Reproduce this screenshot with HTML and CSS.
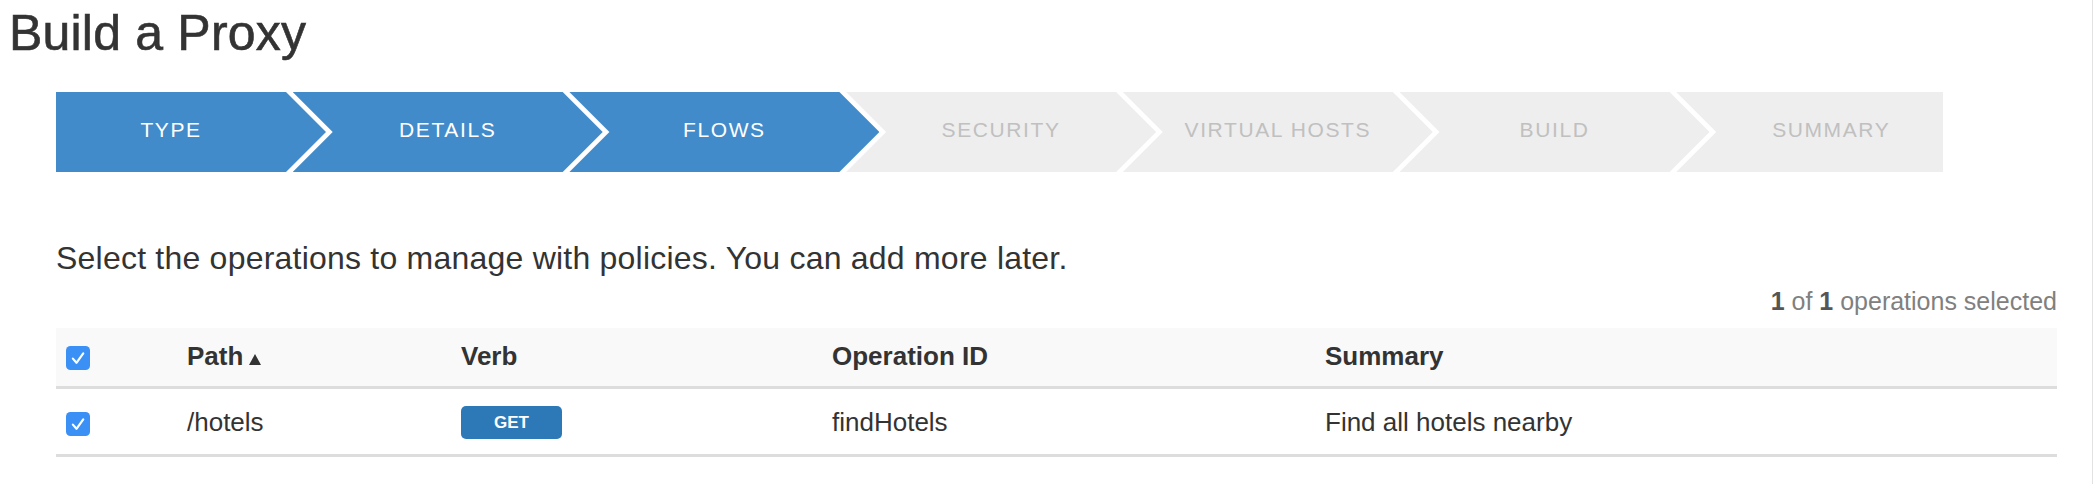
FILE: index.html
```html
<!DOCTYPE html>
<html lang="en">
<head>
<meta charset="utf-8">
<title>Build a Proxy</title>
<link rel="stylesheet" href="styles.css">
</head>
<body>
<div class="page">
  <h1 class="title">Build a Proxy</h1>
  <div class="content">
    <ol class="steps">
      <li class="step done">TYPE</li>
      <li class="step done">DETAILS</li>
      <li class="step done">FLOWS</li>
      <li class="step">SECURITY</li>
      <li class="step">VIRTUAL HOSTS</li>
      <li class="step">BUILD</li>
      <li class="step">SUMMARY</li>
    </ol>
    <p class="intro">Select the operations to manage with policies. You can add more later.</p>
    <div class="counter"><b>1</b> of <b>1</b> operations selected</div>
    <table class="ops">
      <colgroup>
        <col class="c-check">
        <col class="c-path">
        <col class="c-verb">
        <col class="c-id">
        <col>
      </colgroup>
      <thead>
        <tr>
          <th class="check-cell">
            <span class="checkbox"><svg viewBox="0 0 22 22" width="24" height="24"><rect x="0" y="0" width="22" height="22" rx="4" fill="#3b90f5"/><path d="M6.3 11.6 L9.6 15.4 L15.8 6.8" fill="none" stroke="#fff" stroke-width="2" stroke-linecap="round" stroke-linejoin="round"/></svg></span>
          </th>
          <th>Path<span class="sort"></span></th>
          <th>Verb</th>
          <th>Operation ID</th>
          <th>Summary</th>
        </tr>
      </thead>
      <tbody>
        <tr>
          <td class="check-cell">
            <span class="checkbox"><svg viewBox="0 0 22 22" width="24" height="24"><rect x="0" y="0" width="22" height="22" rx="4" fill="#3b90f5"/><path d="M6.3 11.6 L9.6 15.4 L15.8 6.8" fill="none" stroke="#fff" stroke-width="2" stroke-linecap="round" stroke-linejoin="round"/></svg></span>
          </td>
          <td>/hotels</td>
          <td><span class="verb">GET</span></td>
          <td>findHotels</td>
          <td>Find all hotels nearby</td>
        </tr>
      </tbody>
    </table>
  </div>
</div>
</body>
</html>
```
FILE: styles.css
```css
html, body {
  margin: 0;
  padding: 0;
  background: #fff;
}

body {
  font-family: "Liberation Sans", Arial, Helvetica, sans-serif;
  color: #333;
}

.page {
  box-sizing: border-box;
  width: 2093px;
  min-height: 484px;
  border-right: 1px solid #e2e2e2;
}

.title {
  margin: 0;
  padding: 3px 0 0 9px;
  font-size: 50px;
  line-height: 60px;
  font-weight: normal;
  letter-spacing: 0.2px;
  color: #333;
  -webkit-text-stroke: 0.6px #333;
}

.content {
  margin: 29px 0 0 56px;
  width: 2001px;
}

/* wizard steps */
.steps {
  display: flex;
  width: 1887px;
  height: 80px;
  margin: 0;
  padding: 0;
  list-style: none;
  overflow: hidden;
}

.step {
  flex: 0 0 310px;
  box-sizing: border-box;
  margin-right: -33.3px;
  padding-bottom: 5px;
  display: flex;
  align-items: center;
  justify-content: center;
  font-size: 21px;
  letter-spacing: 1.6px;
  background: #eeeeee;
  color: #c0c0c0;
  clip-path: polygon(0 0, 270px 0, 310px 50%, 270px 100%, 0 100%, 40px 50%);
}

.step:first-child {
  margin-left: -40px;
}

.step.done {
  background: #428bca;
  color: #fff;
}

.intro {
  margin: 66px 0 0;
  font-size: 32px;
  line-height: 40px;
  letter-spacing: 0.22px;
  color: #333;
}

.counter {
  margin-top: 7px;
  text-align: right;
  font-size: 25px;
  line-height: 32px;
  color: #808080;
}

.counter b {
  color: #555;
}

/* operations table */
.ops {
  margin-top: 11px;
  width: 2001px;
  table-layout: fixed;
  border-collapse: collapse;
  font-size: 26px;
}

.c-check { width: 131px; }
.c-path { width: 274px; }
.c-verb { width: 371px; }
.c-id { width: 493px; }

.ops th,
.ops td {
  padding: 0;
  text-align: left;
  vertical-align: middle;
  color: #333;
}

.ops thead tr {
  height: 59px;
  background: #f9f9f9;
  border-bottom: 3px solid #dddddd;
}

.ops th {
  font-weight: bold;
}

.ops tbody tr {
  height: 68px;
  border-bottom: 3px solid #dddddd;
}

.ops tbody td {
  padding-top: 2px;
}

.check-cell {
  padding-left: 10px !important;
}

.checkbox {
  display: inline-block;
  width: 24px;
  height: 24px;
  vertical-align: middle;
}

.checkbox svg {
  display: block;
}

.sort {
  display: inline-block;
  width: 0;
  height: 0;
  margin-left: 6px;
  border-left: 6px solid transparent;
  border-right: 6px solid transparent;
  border-bottom: 11px solid #333;
  vertical-align: baseline;
}

.verb {
  display: inline-block;
  width: 101px;
  height: 33px;
  line-height: 33px;
  border-radius: 5px;
  background: #2d79b8;
  color: #fff;
  font-size: 17px;
  font-weight: bold;
  text-align: center;
  vertical-align: middle;
}
```
